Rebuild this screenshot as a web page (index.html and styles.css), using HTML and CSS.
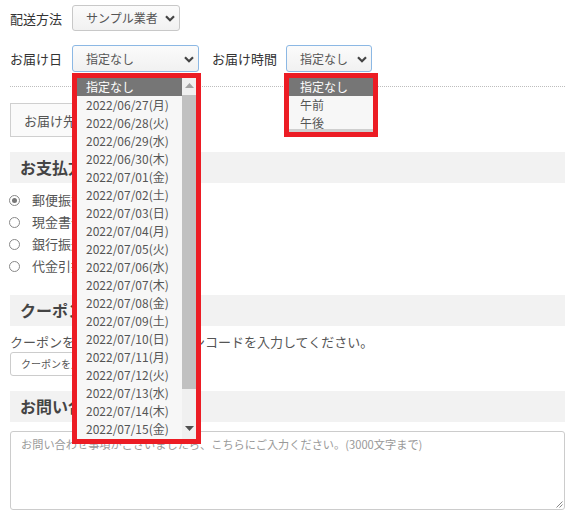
FILE: index.html
```html
<!DOCTYPE html>
<html lang="ja">
<head>
<meta charset="utf-8">
<link rel="stylesheet" href="styles.css">
</head>
<body>
<div class="page">
  <div class="row row-first">
    <span class="label">配送方法</span>
    <div class="select select-method">
      <span class="select-text">サンプル業者</span>
      <svg class="chev" width="10" height="7" viewBox="0 0 10 7"><path d="M1 1.2 L5 5.2 L9 1.2" fill="none" stroke="#444" stroke-width="2.2"/></svg>
    </div>
  </div>
  <div class="row row-second">
    <span class="label">お届け日</span>
    <div class="select select-date focus">
      <span class="select-text">指定なし</span>
      <svg class="chev" width="10" height="7" viewBox="0 0 10 7"><path d="M1 1.2 L5 5.2 L9 1.2" fill="none" stroke="#444" stroke-width="2.2"/></svg>
      <div class="dropdown dd-date">
        <div class="dd-list">
          <div class="dd-items">
            <div class="dd-item selected">指定なし</div>
            <div class="dd-item">2022/06/27(月)</div>
            <div class="dd-item">2022/06/28(火)</div>
            <div class="dd-item">2022/06/29(水)</div>
            <div class="dd-item">2022/06/30(木)</div>
            <div class="dd-item">2022/07/01(金)</div>
            <div class="dd-item">2022/07/02(土)</div>
            <div class="dd-item">2022/07/03(日)</div>
            <div class="dd-item">2022/07/04(月)</div>
            <div class="dd-item">2022/07/05(火)</div>
            <div class="dd-item">2022/07/06(水)</div>
            <div class="dd-item">2022/07/07(木)</div>
            <div class="dd-item">2022/07/08(金)</div>
            <div class="dd-item">2022/07/09(土)</div>
            <div class="dd-item">2022/07/10(日)</div>
            <div class="dd-item">2022/07/11(月)</div>
            <div class="dd-item">2022/07/12(火)</div>
            <div class="dd-item">2022/07/13(水)</div>
            <div class="dd-item">2022/07/14(木)</div>
            <div class="dd-item">2022/07/15(金)</div>
          </div>
          <div class="scrollbar">
            <svg class="arrow" width="9" height="5" viewBox="0 0 9 5"><path d="M0 5 L4.5 0 L9 5 Z" fill="#a3a3a3"/></svg>
            <div class="thumb"></div>
            <svg class="arrow" width="9" height="5" viewBox="0 0 9 5"><path d="M0 0 L4.5 5 L9 0 Z" fill="#505050"/></svg>
          </div>
        </div>
      </div>
    </div>
    <span class="label label-time">お届け時間</span>
    <div class="select select-time focus">
      <span class="select-text">指定なし</span>
      <svg class="chev" width="10" height="7" viewBox="0 0 10 7"><path d="M1 1.2 L5 5.2 L9 1.2" fill="none" stroke="#444" stroke-width="2.2"/></svg>
      <div class="dropdown dd-time">
        <div class="dd-list">
          <div class="dd-items">
            <div class="dd-item selected">指定なし</div>
            <div class="dd-item">午前</div>
            <div class="dd-item">午後</div>
          </div>
        </div>
      </div>
    </div>
  </div>

  <div class="btn-wrap">
    <button class="btn">お届け先を追加する</button>
  </div>

  <h2 class="band">お支払方法</h2>
  <ul class="radios">
    <li><span class="radio checked"></span>郵便振替</li>
    <li><span class="radio"></span>現金書留</li>
    <li><span class="radio"></span>銀行振込</li>
    <li><span class="radio"></span>代金引換</li>
  </ul>

  <h2 class="band band-coupon">クーポン</h2>
  <p class="note">クーポンをお持ちの方はクーポンコードを入力してください。</p>
  <div class="coupon-input">クーポンを入力</div>

  <h2 class="band band-inq">お問い合わせ</h2>
  <div class="textarea">
    <span class="ph">お問い合わせ事項がございましたら、こちらにご入力ください。(3000文字まで)</span>
    <svg class="grip" width="7" height="7" viewBox="0 0 7 7"><path d="M6.5 0.5 L0.5 6.5 M6.5 3.5 L3.5 6.5" stroke="#888" stroke-width="1"/></svg>
  </div>
</div>
</body>
</html>
```

FILE: styles.css
```css
html, body {
  margin: 0;
  padding: 0;
  background: #fff;
}
body {
  font-family: "Noto Sans CJK JP", "Noto Sans", sans-serif;
  font-size: 13px;
  color: #555;
}
.page {
  padding: 5px 9px 0 10px;
}
.row {
  display: flex;
  align-items: center;
  height: 26px;
}
.row-second {
  margin-top: 14px;
  height: 27px;
  padding-bottom: 14px;
  border-bottom: 1px dotted #bdbdbd;
}
.label {
  color: #333;
  font-size: 13px;
  width: 62px;
  flex: none;
}
.label-time {
  width: auto;
  margin-left: 13px;
  margin-right: 9px;
}
.select {
  position: relative;
  box-sizing: border-box;
  height: 26px;
  border: 1px solid #c8c8c8;
  border-radius: 3px;
  background: linear-gradient(#fbfbfb, #f1f1f1);
  display: flex;
  align-items: center;
  padding-left: 13px;
  color: #555;
  font-size: 12px;
  flex: none;
}
.select.focus {
  border-color: #8cb8e4;
  height: 27px;
}
.select-method { width: 108px; }
.select-date { width: 127px; }
.select-time { width: 86px; }
.chev {
  position: absolute;
  right: 4px;
  top: 50%;
  margin-top: -3px;
}
.select-text {
  line-height: 1;
}
.dropdown {
  position: absolute;
  left: -1px;
  top: 100%;
  margin-top: 2px;
  border: 5px solid #ec1c24;
  z-index: 10;
}
.dd-time {
  left: -3px;
}
.dd-list {
  display: flex;
  background: #f7f7f7;
}
.dd-date .dd-list {
  width: 119px;
  height: 361px;
  overflow: hidden;
}
.dd-time .dd-list {
  width: 84px;
  height: 54px;
  box-shadow: inset 0 -3px 0 #cfcfcf;
}
.dd-items {
  flex: 1;
}
.dd-item {
  height: 18px;
  line-height: 18px;
  padding-left: 9px;
  color: #555;
  white-space: nowrap;
  font-size: 12px;
}
.dd-time .dd-item {
  padding-left: 11px;
}
.dd-item.selected {
  background: #767676;
  color: #fff;
}
.scrollbar {
  width: 14px;
  flex: none;
  background: #f0f0f0;
  display: flex;
  flex-direction: column;
  align-items: center;
}
.scrollbar .arrow {
  margin: 5px 0 7px;
}
.thumb {
  width: 14px;
  height: 294px;
  background: #c1c1c1;
}
.scrollbar .arrow:last-child {
  margin-top: auto;
  margin-bottom: 8px;
}
.btn-wrap {
  margin-top: 16px;
}
.btn {
  display: block;
  font-family: inherit;
  font-size: 13px;
  color: #555;
  height: 34px;
  width: 160px;
  border: 1px solid #cfcfcf;
  background: #fafafa;
  text-align: left;
  padding: 0 0 0 13px;
  margin: 0;
}
.band {
  margin: 15px 0 0;
  height: 31px;
  line-height: 31px;
  background: #f2f2f2;
  font-size: 16px;
  font-weight: bold;
  color: #444;
  padding-left: 10px;
}
.radios {
  list-style: none;
  margin: 6px 0 0;
  padding: 0;
}
.radios li {
  height: 22px;
  line-height: 22px;
  display: flex;
  align-items: center;
  color: #555;
}
.radio {
  box-sizing: border-box;
  width: 11px;
  height: 11px;
  border: 1px solid #888;
  border-radius: 50%;
  margin: 0 12px 0 -1px;
  background: #fff;
  position: relative;
}
.radio.checked::after {
  content: "";
  position: absolute;
  left: 2px;
  top: 2px;
  width: 5px;
  height: 5px;
  border-radius: 50%;
  background: #777;
}
.band-coupon {
  margin-top: 18px;
}
.note {
  margin: 7px 0 0;
  height: 18px;
  line-height: 18px;
  color: #555;
}
.coupon-input {
  margin-top: 1px;
  box-sizing: border-box;
  height: 24px;
  width: 180px;
  border: 1px solid #ccc;
  border-radius: 3px;
  font-size: 10px;
  line-height: 22px;
  padding-left: 10px;
  color: #555;
}
.band-inq {
  margin-top: 15px;
}
.textarea {
  position: relative;
  margin-top: 9px;
  box-sizing: border-box;
  height: 79px;
  border: 1px solid #ccc;
  border-radius: 3px;
  padding: 2px 0 0 10px;
}
.ph {
  color: #999;
  font-size: 11.2px;
}
.grip {
  position: absolute;
  right: 1px;
  bottom: 1px;
}
```
